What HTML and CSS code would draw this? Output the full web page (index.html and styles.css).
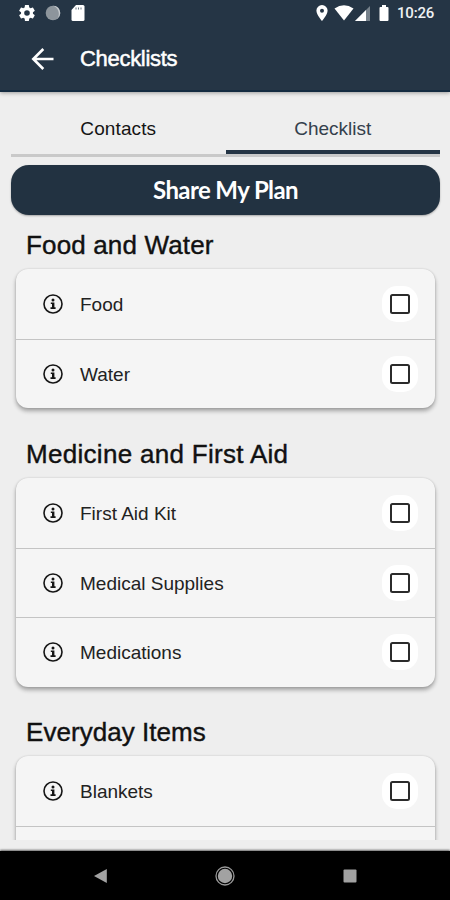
FILE: index.html
```html
<!DOCTYPE html>
<html lang="en">
<head>
<meta charset="utf-8">
<title>Checklists</title>
<link rel="stylesheet" href="styles.css">
</head>
<body>
<svg class="defs" width="0" height="0" aria-hidden="true">
  <symbol id="info" viewBox="0 0 20 20">
    <circle cx="10" cy="10" r="9" fill="none" stroke="#151515" stroke-width="1.6"/>
    <circle cx="10" cy="6" r="1.5" fill="#151515"/>
    <path d="M7.800 8.500h3.600v4.800h1.200v1.700H7.500v-1.700H9v-3.200H7.800z" fill="#151515"/>
  </symbol>
</svg>
<div class="screen">
  <header class="header">
    <div class="status">
      <svg class="gear" width="16" height="16" viewBox="2 2 20 20" fill="#fff"><path d="M19.4 13a7.500 7.500 0 0 0 0-2l2.100-1.600a.5.5 0 0 0 .1-.6l-2-3.500a.5.5 0 0 0-.6-.2l-2.500 1a7.300 7.300 0 0 0-1.700-1L14.400 2.400a.5.5 0 0 0-.5-.4h-4a.5.5 0 0 0-.5.4L9.100 5.100a7.700 7.700 0 0 0-1.700 1l-2.500-1a.5.5 0 0 0-.6.2l-2 3.500a.5.5 0 0 0 .1.6L4.600 11a7.500 7.500 0 0 0 0 2l-2.200 1.600a.5.5 0 0 0-.1.6l2 3.500c.1.2.4.3.6.2l2.500-1a7.300 7.300 0 0 0 1.700 1l.3 2.700c0 .2.2.4.5.4h4c.3 0 .5-.2.5-.4l.4-2.700a7.700 7.700 0 0 0 1.700-1l2.500 1c.2.1.5 0 .6-.2l2-3.500a.5.5 0 0 0-.1-.6zM12 15.500a3.500 3.500 0 1 1 0-7 3.500 3.500 0 0 1 0 7z"/></svg>
      <svg class="sync" width="16" height="16" viewBox="0 0 16 16"><circle cx="8" cy="8" r="7.300" fill="#8d959c"/><path d="M8 .8a7.200 7.200 0 0 1 4.300 12.900A8.500 8.500 0 0 0 8 .8zM2 10a7 7 0 0 0 9 4.400A8 8 0 0 1 2 10z" fill="#c3c8cc"/></svg>
      <svg class="sd" width="14" height="16" viewBox="0 0 14 16"><path d="M5 0h7a1.500 1.500 0 0 1 1.500 1.500v13A1.500 1.500 0 0 1 12 16H2a1.500 1.500 0 0 1-1.500-1.500V5z" fill="#fff"/><path d="M5 2.500v2M7.500 2.500v2M10 2.500v2" stroke="#687580" stroke-width="1"/></svg>
      <svg class="pin" width="12" height="16" viewBox="0 0 12 16"><path fill-rule="evenodd" d="M6 0a5.600 5.600 0 0 0-5.600 5.600C.4 10 6 16 6 16s5.600-6 5.600-10.400A5.600 5.600 0 0 0 6 0zm0 3.700a2 2 0 1 1 0 4 2 2 0 0 1 0-4z" fill="#fff"/></svg>
      <svg class="wifi" width="20" height="16" viewBox="0 0 20 16"><path d="M.5 3.500Q10-2.800 19.500 3.500L10 15.500z" fill="#fff"/></svg>
      <svg class="signal" width="15" height="15" viewBox="0 0 15 15"><path d="M15 0v15H0z" fill="#76818b"/><path d="M11 4v11H0z" fill="#fff"/></svg>
      <svg class="battery" width="10" height="16" viewBox="0 0 10 16"><path d="M3 0h4v2h1.500q1 0 1 1v12q0 1-1 1h-7q-1 0-1-1V3q0-1 1-1H3z" fill="#fff"/></svg>
      <span class="clock">10:26</span>
    </div>
    <div class="appbar">
      <svg width="24" height="24" viewBox="0 0 24 24" fill="none" stroke="#fff" stroke-width="2.600"><path d="M22.500 12H2.500M12.300 2L2.300 12l10 10"/></svg>
      <h1 class="title">Checklists</h1>
    </div>
  </header>
  <nav class="tabs">
    <div class="tab"><span>Contacts</span></div>
    <div class="tab active"><span>Checklist</span></div>
  </nav>
  <button class="share"><span>Share My Plan</span></button>
  <main class="list">
    <h2 class="heading food">Food and Water</h2>
    <div class="card">
      <div class="row"><svg class="info"><use href="#info"/></svg><span>Food</span><i class="check"></i></div>
      <div class="row"><svg class="info"><use href="#info"/></svg><span>Water</span><i class="check"></i></div>
    </div>
    <h2 class="heading medicine">Medicine and First Aid</h2>
    <div class="card">
      <div class="row"><svg class="info"><use href="#info"/></svg><span>First Aid Kit</span><i class="check"></i></div>
      <div class="row"><svg class="info"><use href="#info"/></svg><span>Medical Supplies</span><i class="check"></i></div>
      <div class="row"><svg class="info"><use href="#info"/></svg><span>Medications</span><i class="check"></i></div>
    </div>
    <h2 class="heading everyday">Everyday Items</h2>
    <div class="card">
      <div class="row"><svg class="info"><use href="#info"/></svg><span>Blankets</span><i class="check"></i></div>
      <div class="row"></div>
    </div>
  </main>
  <footer class="navbar">
    <svg width="14" height="16" viewBox="0 0 14 16"><path d="M13.800 1v14L1 8z" fill="#a2a2a2"/></svg>
    <svg width="20" height="20" viewBox="0 0 20 20"><circle cx="10" cy="10" r="9" fill="none" stroke="#999" stroke-width="1.300"/><circle cx="10" cy="10" r="7.200" fill="#a2a2a2"/></svg>
    <svg width="14" height="14" viewBox="0 0 14 14"><rect x=".5" y=".5" width="13" height="13" rx="1" fill="#a2a2a2"/></svg>
  </footer>
</div>
</body>
</html>
```
FILE: styles.css
```css
*, *::before { box-sizing: border-box; }
body { margin: 0; background: #eee; font-family: "Liberation Sans", Arial, sans-serif; color: #141414; }
.defs { position: absolute; }
svg { display: block; flex: none; }
h1, h2 { margin: 0; font-weight: 400; }
.screen { width: 450px; height: 900px; overflow: hidden; display: flex; flex-direction: column; }

.header { height: 92px; flex: none; background: #253545; border-bottom: 2px solid #142b41; box-shadow: 0 1px 4px rgba(0,0,0,.35); }
.status { height: 26px; display: flex; align-items: center; padding-left: 19px; }
.sync { margin-left: 10px; }
.sd { margin-left: 10px; }
.pin { margin-left: 231px; }
.wifi { margin-left: 6px; }
.signal { margin-left: 1px; }
.battery { margin-left: 9px; }
.clock { margin-left: 8px; font: 500 15px/26px Roboto, sans-serif; letter-spacing: -.2px; color: #eef1f3; }
.appbar { height: 66px; display: flex; align-items: center; padding-left: 31px; }
.title { margin-left: 25px; color: #fff; font-size: 22px; line-height: 30px; letter-spacing: -.3px; -webkit-text-stroke: .5px #fff; }

.tabs { flex: none; height: 65px; margin: 0 10px 0 11px; display: flex; border-bottom: 3px solid #c9c9c9; }
.tab { flex: 1; text-align: center; font-size: 19px; line-height: 22px; padding-top: 26px; letter-spacing: .1px; }
.active { color: #34404c; border-bottom: 4px solid #253545; letter-spacing: 0; }

.share { flex: none; height: 50px; margin: 8px 10px 0 11px; padding: 0 0 2px; border: 0; border-radius: 18px; background: #223241; color: #fff; font: 700 24px Lato, sans-serif; letter-spacing: -.6px; box-shadow: 0 1px 2px rgba(0,0,0,.3); }

.list { flex: none; height: 625px; padding: 0 15px 0 16px; overflow: hidden; }
.heading { height: 70px; padding: 31px 0 0 10px; font-size: 26px; line-height: 30px; color: #111; -webkit-text-stroke: .4px #111; }
.food { height: 54px; padding-top: 15px; letter-spacing: .15px; }
.medicine { letter-spacing: .3px; }
.everyday { height: 69.500px; padding-top: 30px; letter-spacing: .05px; }
.card { border-radius: 12px; background: #f5f5f5; box-shadow: 0 3px 4px rgba(0,0,0,.32), 0 0 2px rgba(0,0,0,.15); }
.row { height: 69.500px; display: flex; align-items: center; padding: 0 17px 0 27px; font-size: 19px; }
.row + .row { border-top: 1px solid #c4c4c4; }
.row span { margin-left: 17px; flex: 1; color: #222; position: relative; top: 1px; }
.info { width: 20px; height: 20px; }
.check { width: 36px; height: 36px; border-radius: 15px; background: #fff; display: grid; place-items: center; }
.check::before { content: ""; width: 20px; height: 20px; border: 2px solid #2b2b2b; border-radius: 2.500px; }

.navbar { height: 49px; flex: none; margin-top: auto; background: #000; box-shadow: 0 -1px 2px rgba(0,0,0,.6); display: flex; align-items: center; padding-left: 93px; }
.navbar svg + svg { margin-left: 108px; }
```
